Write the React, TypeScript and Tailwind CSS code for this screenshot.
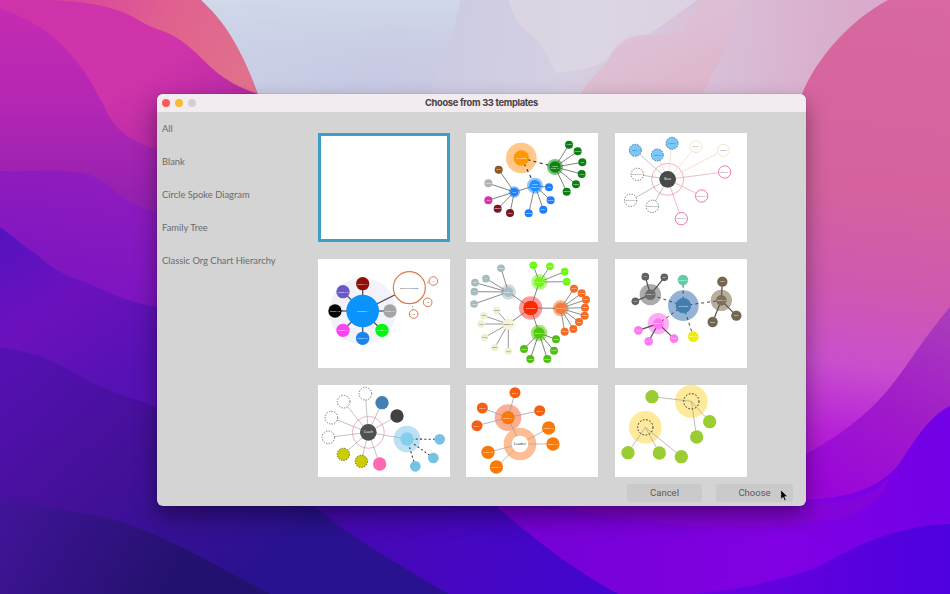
import type React from "react"

interface DiagramNode {
  x: number
  y: number
  r: number
  fill?: string
  stroke?: string
  strokeWidth?: number
  dash?: string
  halo?: number
  haloFill?: string
  haloStroke?: string
  label?: string
  labelSize?: number
  labelFill?: string
}

interface DiagramEdge {
  from: number
  to: number
  color?: string
  width?: number
  dash?: string
}

interface Template {
  id: string
  origin: string
  nodes: DiagramNode[]
  edges: DiagramEdge[]
}

const categories = ["All", "Blank", "Circle Spoke Diagram", "Family Tree", "Classic Org Chart Hierarchy"]

const spokes = (from: number, to: number[], color = "#555555", width = 2.2, dash?: string): DiagramEdge[] =>
  to.map((t) => ({ from, to: t, color, width, dash }))

const ring = (list: [number, number, string?][], base: Omit<DiagramNode, "x" | "y">): DiagramNode[] =>
  list.map(([x, y, label]) => ({ ...base, x, y, label }))

const templates: Template[] = [
  { id: "blank", origin: "12 9 396 327", nodes: [], edges: [] },
  {
    id: "team-leads",
    origin: "12 9 396 327",
    nodes: [
      { x: 178, y: 84, r: 23, fill: "#ff9800", halo: 46, haloFill: "#ffc88a", label: "My Team", labelSize: 7.5 },
      { x: 279, y: 111, r: 17, fill: "#0b870b", halo: 24, haloFill: "#7fbf7f", label: "Team\nLead #1", labelSize: 7 },
      { x: 219, y: 167, r: 17, fill: "#1e90ff", halo: 24, haloFill: "#8ec7ff", label: "Team\nLead #2", labelSize: 7 },
      { x: 157, y: 186, r: 12, fill: "#1e80ff", halo: 17, haloFill: "#85bcff", label: "Sub" },
      ...ring([[321, 44, "Lucas"], [347, 64, "Jennifer"], [361, 97, "Jeff"], [359, 132, "Helen"], [342, 163, "Martin"], [314, 185, "Charlie"]], { r: 12, fill: "#0b7f10" }),
      ...ring([[261, 172, "Alan"], [266, 211, "Robert"], [244, 239, "Emily"], [200, 250, "Sophia"]], { r: 12, fill: "#1e80ff" }),
      { x: 110, y: 119, r: 12, fill: "#8b5726", label: "John" },
      { x: 79, y: 160, r: 12, fill: "#b3b3b3", label: "Susan" },
      { x: 79, y: 211, r: 12, fill: "#df2fa8", label: "Amy" },
      { x: 107, y: 236, r: 12, fill: "#7b1520", label: "George" },
      { x: 144, y: 249, r: 12, fill: "#7b1520", label: "Harry" },
    ],
    edges: [
      { from: 0, to: 1, width: 3.4, color: "#333333", dash: "9 10" },
      { from: 0, to: 2, width: 3.4, color: "#333333", dash: "9 10" },
      { from: 3, to: 2 },
      ...spokes(1, [4, 5, 6, 7, 8, 9]),
      ...spokes(2, [10, 11, 12, 13]),
      ...spokes(3, [14, 15, 16, 17, 18]),
    ],
  },
  {
    id: "boss",
    origin: "14 9 396 327",
    nodes: [
      { x: 172, y: 148, r: 25, fill: "#4a4a4a", halo: 48, haloStroke: "#efa0ac", label: "Boss", labelSize: 9.5 },
      ...ring([[75, 61, "Team 1"], [141, 75, "Team 2"], [185, 40, "Team 3"]], { r: 18, fill: "#7cc8f8", stroke: "#356b93", strokeWidth: 2.5, dash: "5 3", labelFill: "#34678f" }),
      ...ring([[257, 50, "Name 1"], [339, 61, "Name 2"]], { r: 18, fill: "#ffffff", stroke: "#f6dfc0", strokeWidth: 2.5, labelFill: "#777777" }),
      ...ring([[343, 126, "Resource 1"], [274, 198, "Resource 2"], [213, 266, "Resource 3"]], { r: 18.5, fill: "#ffffff", stroke: "#ea78b2", strokeWidth: 3, labelFill: "#a8527d" }),
      ...ring([[81, 133, "Consultant 1"], [61, 211, "Consultant 2"], [126, 229, "Consultant 3"]], { r: 18.5, fill: "#ffffff", stroke: "#555555", strokeWidth: 2.4, dash: "4 4", labelFill: "#666666" }),
    ],
    edges: [
      ...spokes(0, [1], "#a6b3bd"),
      ...spokes(0, [2, 3, 4, 5], "#f1d8bc"),
      ...spokes(0, [6, 7, 8], "#f0a3a8"),
      ...spokes(0, [9, 10, 11], "#aaaaaa"),
    ],
  },
  {
    id: "division",
    origin: "12 9 396 327",
    nodes: [
      { x: 146, y: 165, r: 49, fill: "#0a94fb", halo: 100, haloFill: "#f1f2fa", label: "Division A", labelSize: 7.5 },
      { x: 146, y: 83, r: 20, fill: "#930f05", label: "Team #1", labelSize: 7.5 },
      { x: 87, y: 107, r: 20, fill: "#6b58cb", label: "Team #2", labelSize: 7.5 },
      { x: 63, y: 165, r: 20, fill: "#000000", label: "Team #3", labelSize: 7.5 },
      { x: 87, y: 223, r: 20, fill: "#ff40f4", label: "Team #4", labelSize: 7.5 },
      { x: 146, y: 247, r: 20, fill: "#1b84ec", label: "Team #5", labelSize: 7.5 },
      { x: 204, y: 223, r: 20, fill: "#00f80a", label: "Team #6", labelSize: 7.5 },
      { x: 228, y: 165, r: 20, fill: "#a4a4a4", label: "Team #7", labelSize: 7.5 },
      { x: 286, y: 95, r: 48, fill: "#ffffff", stroke: "#dc7848", strokeWidth: 3.6, label: "Satellite Division", labelSize: 7.2, labelFill: "#222222" },
      ...ring([[358, 75, "#1"], [341, 139, "#2"], [299, 174, "#3"]], { r: 13, fill: "#ffffff", stroke: "#dc7848", strokeWidth: 3, labelSize: 7, labelFill: "#333333" }),
    ],
    edges: [
      ...spokes(0, [1, 2, 3, 4, 5, 6, 7, 8], "#55555f", 4),
      ...spokes(8, [9, 10, 11], "#777777", 2, "5 6"),
    ],
  },
  {
    id: "big-boss",
    origin: "14 9 396 327",
    nodes: [
      { x: 208, y: 156, r: 22, fill: "#ff2800", halo: 35, haloFill: "#ff9a9a", label: "Big Boss", labelSize: 7.5 },
      { x: 141, y: 108, r: 15, fill: "#a9bdc3", halo: 23, haloFill: "#d0dde0", label: "Team #1", labelSize: 7 },
      { x: 234, y: 78, r: 16, fill: "#72fa17", halo: 24, haloFill: "#b9f78a", label: "Team #2", labelSize: 7 },
      { x: 298, y: 157, r: 17, fill: "#fa7832", halo: 24, haloFill: "#ffb184", label: "Team #3", labelSize: 7 },
      { x: 233, y: 231, r: 17, fill: "#52c80c", halo: 25, haloFill: "#a9e37c", label: "Team #4", labelSize: 7 },
      { x: 141, y: 204, r: 17, fill: "#f4f4dc", halo: 23, haloFill: "#fafaf0", label: "Team #5", labelSize: 7.5, labelFill: "#222222" },
      ...ring([[119, 37, "Name"], [74, 68, "Liz"], [41, 80, "Bob"], [39, 107, "Kim"], [38, 144, "Karen"]], { r: 11.5, fill: "#a4bcbe" }),
      ...ring([[216, 28, "Sam"], [266, 31, "Mark"], [310, 47, "Jim"], [316, 77, "Molly"]], { r: 11.5, fill: "#6df916" }),
      ...ring([[338, 98, "Brian"], [361, 112, "William"], [374, 131, "Peter"], [371, 155, "Todd"], [370, 179, "Sarah"], [353, 198, "Mary"], [336, 219, "Nick"], [310, 227, "Claire"]], { r: 12, fill: "#f66c25" }),
      ...ring([[284, 250, "Olivia"], [278, 284, "Taylor"], [258, 309, "Steven"], [207, 309, "Name"], [188, 279, "Daniel"]], { r: 12, fill: "#50bd14" }),
      ...ring([[106, 163, "Louisa"], [67, 179, "Tom"], [59, 204, "Fred"], [70, 244, "Brian"], [100, 275, "James"], [141, 286, "Julia"]], { r: 11, fill: "#efefd4", labelFill: "#555555" }),
    ],
    edges: [
      ...spokes(0, [1, 2, 3, 4, 5], "#666666", 2.4),
      ...spokes(1, [6, 7, 8, 9, 10], "#707070", 2.4),
      ...spokes(2, [11, 12, 13, 14], "#707070", 2.4),
      ...spokes(3, [15, 16, 17, 18, 19, 20, 21, 22], "#707070", 2.4),
      ...spokes(4, [23, 24, 25, 26, 27], "#606060", 2.4),
      ...spokes(5, [28, 29, 30, 31, 32, 33], "#808080", 2.4),
    ],
  },
  {
    id: "big-boss-dashed",
    origin: "14 9 396 327",
    nodes: [
      { x: 219, y: 149, r: 23, fill: "#427fb1", halo: 46, haloFill: "#95b4d5", label: "Big Boss", labelSize: 7 },
      { x: 120, y: 116, r: 16, fill: "#6b6b6b", halo: 32, haloFill: "#ababab", label: "Team #1", labelSize: 6.5 },
      { x: 333, y: 133, r: 16, fill: "#7c7059", halo: 32, haloFill: "#b9ae9c", label: "Team #3", labelSize: 6.5 },
      { x: 144, y: 203, r: 16, fill: "#ff78f3", halo: 32, haloFill: "#ffacf7", label: "Team #4", labelSize: 6.5 },
      { x: 218, y: 72, r: 16, fill: "#62cda4", label: "Team #2", labelSize: 6.5 },
      { x: 249, y: 242, r: 16, fill: "#eeee00", label: "Team #5", labelSize: 6.5 },
      ...ring([[105, 62, "Liz"], [162, 64, "Bob"], [75, 136, "Kim"]], { r: 11.5, fill: "#606060" }),
      ...ring([[336, 77, "Mark"], [307, 198, "Steve"], [378, 179, "John"]], { r: 15.5, fill: "#74664f" }),
      ...ring([[84, 223, "Lucy"], [115, 256, "Emma"], [191, 248, "Karen"]], { r: 13, fill: "#ff78f3" }),
    ],
    edges: [
      ...spokes(0, [1, 2, 3, 4, 5], "#444444", 3, "9 9"),
      ...spokes(1, [6, 7, 8], "#505050", 3.6),
      ...spokes(2, [9, 10, 11], "#505050", 3.6),
      ...spokes(3, [12, 13, 14], "#505050", 3.6),
    ],
  },
  {
    id: "coach",
    origin: "12 14 396 327",
    nodes: [
      { x: 163, y: 156, r: 25, fill: "#505050", halo: 48, haloStroke: "#f0a5ae", label: "Coach", labelSize: 9.5 },
      ...ring([[154, 40], [89, 64], [52, 112], [43, 171]], { r: 19, fill: "#ffffff", stroke: "#555555", strokeWidth: 2.4, dash: "4 4" }),
      { x: 204, y: 67, r: 20, fill: "#427fb4" },
      { x: 249, y: 107, r: 20, fill: "#404042" },
      { x: 279, y: 176, r: 20, fill: "#83ceea", halo: 40, haloFill: "#bce0f4" },
      ...ring([[88, 222], [142, 243]], { r: 18.5, fill: "#cbcc04", stroke: "#5c5c0b", strokeWidth: 2.8, dash: "4 4" }),
      { x: 197, y: 251, r: 20, fill: "#ff69b4" },
      ...ring([[377, 177], [358, 233], [304, 258]], { r: 16, fill: "#74c2e5" }),
    ],
    edges: [
      ...spokes(0, [1, 2, 3, 4, 5, 6, 7, 8, 9, 10], "#adadad", 2.2),
      ...spokes(7, [11, 12, 13], "#333333", 3.2, "6 7"),
    ],
  },
  {
    id: "leader",
    origin: "12 14 396 327",
    nodes: [
      { x: 174, y: 191, r: 25, fill: "#ffffff", halo: 49, haloFill: "#ffbd93", label: "Leader", labelSize: 11.5, labelFill: "#111111" },
      { x: 138, y: 112, r: 20, fill: "#f97a0a", halo: 40, haloFill: "#fcae94", label: "Team #1", labelSize: 7 },
      ...ring([[159, 37, "Sub 4"], [61, 83, "Sub 2"], [45, 136, "Sub 1"], [233, 91, "Sub 3"]], { r: 16.5, fill: "#f36013", labelSize: 7 }),
      ...ring([[260, 143, "Team #2"], [273, 191, "Team #3"], [103, 260, "Team #4"], [78, 216, "Team #5"]], { r: 20, fill: "#fa7907", labelSize: 7.5 }),
    ],
    edges: [
      { from: 0, to: 1, color: "#999999", width: 2.2 },
      ...spokes(1, [2, 3, 4, 5], "#999999", 2.2),
      ...spokes(0, [6, 7, 8, 9], "#a5a5a5", 2.2),
    ],
  },
  {
    id: "pods",
    origin: "14 14 396 327",
    nodes: [
      { x: 243, y: 63, r: 23, fill: "none", stroke: "#222222", strokeWidth: 2.8, dash: "5 5", halo: 49, haloFill: "#ffe99a" },
      { x: 105, y: 141, r: 23, fill: "none", stroke: "#222222", strokeWidth: 2.8, dash: "5 5", halo: 49, haloFill: "#ffe99a" },
      ...ring([[125, 49], [298, 124], [259, 170], [53, 217], [147, 218], [213, 229]], { r: 20, fill: "#9acd32" }),
    ],
    edges: [...spokes(0, [2, 3, 4], "#aaa59a"), ...spokes(1, [5, 6, 7], "#aaa59a")],
  },
]

const NodeLabel: React.FC<{ node: DiagramNode }> = ({ node }) => {
  const size = node.labelSize ?? 6
  const lines = (node.label ?? "").split("\n")
  return (
    <>
      {lines.map((line, i) => (
        <text
          key={line}
          x={node.x}
          y={node.y + size * 0.36 + (i - (lines.length - 1) / 2) * size * 1.1}
          textAnchor="middle"
          fontSize={size}
          fill={node.labelFill ?? "#ffffff"}
        >
          {line}
        </text>
      ))}
    </>
  )
}

const Diagram: React.FC<{ template: Template }> = ({ template }) => {
  const { nodes, edges, origin } = template
  return (
    <svg viewBox={origin} className="block h-[109px] w-[132px] font-['Open_Sans',sans-serif]">
      {nodes.map((n, i) =>
        n.halo ? (
          <circle key={i} cx={n.x} cy={n.y} r={n.halo} fill={n.haloFill ?? "none"} stroke={n.haloStroke} strokeWidth={2.5} />
        ) : null,
      )}
      {edges.map((e, i) => (
        <line
          key={i}
          x1={nodes[e.from].x}
          y1={nodes[e.from].y}
          x2={nodes[e.to].x}
          y2={nodes[e.to].y}
          stroke={e.color ?? "#555555"}
          strokeWidth={e.width ?? 2.2}
          strokeDasharray={e.dash}
        />
      ))}
      {nodes.map((n, i) => (
        <g key={i}>
          <circle cx={n.x} cy={n.y} r={n.r} fill={n.fill} stroke={n.stroke} strokeWidth={n.strokeWidth} strokeDasharray={n.dash} />
          {n.label && <NodeLabel node={n} />}
        </g>
      ))}
    </svg>
  )
}

const Wallpaper: React.FC = () => (
  <svg viewBox="0 0 950 594" className="absolute inset-0 h-full w-full" preserveAspectRatio="none">
    <defs>
      <linearGradient id="sky" gradientUnits="userSpaceOnUse" x1="230" y1="0" x2="860" y2="60">
        <stop offset="0" stopColor="#cbd4e9" />
        <stop offset="0.25" stopColor="#c8cae4" />
        <stop offset="0.55" stopColor="#d6cfe1" />
        <stop offset="0.8" stopColor="#d9bdd6" />
        <stop offset="1" stopColor="#d9aacb" />
      </linearGradient>
      <linearGradient id="mist" gradientUnits="userSpaceOnUse" x1="0" y1="0" x2="0" y2="94">
        <stop offset="0" stopColor="#d0daea" stopOpacity="0.9" />
        <stop offset="1" stopColor="#c6c4e2" stopOpacity="0.3" />
      </linearGradient>
      <linearGradient id="blush" gradientUnits="userSpaceOnUse" x1="640" y1="30" x2="660" y2="94">
        <stop offset="0" stopColor="#dfbfd2" />
        <stop offset="1" stopColor="#e0b4c9" />
      </linearGradient>
      <linearGradient id="coral" gradientUnits="userSpaceOnUse" x1="60" y1="0" x2="250" y2="90">
        <stop offset="0" stopColor="#d8449f" />
        <stop offset="0.5" stopColor="#e0618f" />
        <stop offset="1" stopColor="#e0728c" />
      </linearGradient>
      <linearGradient id="magenta" gradientUnits="userSpaceOnUse" x1="60" y1="0" x2="150" y2="150">
        <stop offset="0" stopColor="#cf33aa" />
        <stop offset="0.6" stopColor="#d034aa" />
        <stop offset="1" stopColor="#b82aa5" />
      </linearGradient>
      <linearGradient id="orchid" gradientUnits="userSpaceOnUse" x1="0" y1="0" x2="0" y2="215">
        <stop offset="0" stopColor="#c62cb0" />
        <stop offset="0.5" stopColor="#b326b4" />
        <stop offset="1" stopColor="#8f20ae" />
      </linearGradient>
      <linearGradient id="violet" gradientUnits="userSpaceOnUse" x1="80" y1="170" x2="60" y2="300">
        <stop offset="0" stopColor="#901cbd" />
        <stop offset="1" stopColor="#7a14c2" />
      </linearGradient>
      <linearGradient id="indigo" gradientUnits="userSpaceOnUse" x1="0" y1="230" x2="100" y2="390">
        <stop offset="0" stopColor="#5512c0" />
        <stop offset="0.5" stopColor="#6c11bd" />
        <stop offset="1" stopColor="#5611b4" />
      </linearGradient>
      <linearGradient id="deep" gradientUnits="userSpaceOnUse" x1="40" y1="350" x2="240" y2="580">
        <stop offset="0" stopColor="#5410b0" />
        <stop offset="0.45" stopColor="#431098" />
        <stop offset="1" stopColor="#2a1190" />
      </linearGradient>
      <linearGradient id="night" gradientUnits="userSpaceOnUse" x1="0" y1="500" x2="160" y2="594">
        <stop offset="0" stopColor="#42149a" />
        <stop offset="1" stopColor="#24116f" />
      </linearGradient>
      <linearGradient id="cobalt" gradientUnits="userSpaceOnUse" x1="330" y1="500" x2="600" y2="594">
        <stop offset="0" stopColor="#4609b0" />
        <stop offset="1" stopColor="#4405d0" />
      </linearGradient>
      <linearGradient id="rose" gradientUnits="userSpaceOnUse" x1="900" y1="0" x2="840" y2="480">
        <stop offset="0" stopColor="#d8689f" />
        <stop offset="0.4" stopColor="#d5629f" />
        <stop offset="0.6" stopColor="#cf58b0" />
        <stop offset="0.76" stopColor="#c94fcd" />
        <stop offset="0.9" stopColor="#b722d8" />
        <stop offset="1" stopColor="#a810da" />
      </linearGradient>
      <linearGradient id="fuchsia" gradientUnits="userSpaceOnUse" x1="950" y1="320" x2="850" y2="500">
        <stop offset="0" stopColor="#aa3bbc" />
        <stop offset="0.5" stopColor="#a01bc9" />
        <stop offset="1" stopColor="#9a06da" />
      </linearGradient>
      <linearGradient id="purple" gradientUnits="userSpaceOnUse" x1="520" y1="500" x2="950" y2="480">
        <stop offset="0" stopColor="#7402d4" />
        <stop offset="0.6" stopColor="#8200e4" />
        <stop offset="1" stopColor="#7200e6" />
      </linearGradient>
      <linearGradient id="electric" gradientUnits="userSpaceOnUse" x1="700" y1="0" x2="950" y2="0">
        <stop offset="0" stopColor="#6c00de" />
        <stop offset="1" stopColor="#4e00df" />
      </linearGradient>
    </defs>
    <rect width="950" height="594" fill="url(#sky)" />
    <path d="M190 0H460C455 35 440 60 430 94H190Z" fill="url(#mist)" />
    <path d="M509 0C514 20 520 26 530 34C545 45 548 60 556 73C575 71 600 68 612 55C625 40 635 36 650 34L697 0Z" fill="#ded8e4" opacity="0.7" />
    <path d="M581 94C590 76 602 70 608 60C616 42 628 36 642 35C660 34 678 36 686 27C695 14 696 6 700 0H739C734 35 718 62 703 94Z" fill="url(#blush)" opacity="0.75" />
    <path d="M0 0H201C225 22 241 48 258 94V200H0Z" fill="url(#coral)" />
    <path d="M0 0H50C95 2 120 8 142 22C155 30 165 30 177 38C205 55 210 78 258 94V200H0Z" fill="url(#magenta)" />
    <path d="M0 8C20 16 50 28 73 57C92 80 96 92 103 104C115 132 130 142 170 154V320H0Z" fill="url(#orchid)" />
    <path d="M0 171C30 173 75 166 97 178C120 191 125 208 170 214V340H0Z" fill="url(#violet)" />
    <path d="M0 227C15 238 25 247 36 254C50 267 62 274 79 280C115 294 125 303 170 309V480H0Z" fill="url(#indigo)" />
    <path d="M0 347C30 352 45 357 60 365C80 375 90 384 109 390C130 398 160 404 210 440L315 480L460 594H0Z" fill="url(#deep)" />
    <path d="M0 498C45 508 78 510 121 522C175 540 220 568 270 594H0Z" fill="url(#night)" />
    <path d="M290 480H480L630 594H448C400 565 350 537 315 507Z" fill="url(#cobalt)" />
    <path d="M888 0C850 20 815 60 802 94L780 500H950V0Z" fill="url(#rose)" />
    <path d="M950 307C920 342 903 375 878 401C855 425 825 445 790 462V540H950Z" fill="url(#fuchsia)" />
    <path d="M470 480L790 500C850 500 885 488 905 455C920 432 932 415 950 406V594H618C570 567 535 540 497 507Z" fill="url(#purple)" />
    <path d="M560 500H810C850 508 880 490 890 475C880 510 850 520 800 524C740 530 640 528 560 506Z" fill="#8f0bc8" opacity="0.35" />
    <path d="M690 594C740 590 780 580 818 567C855 545 900 525 950 524V594Z" fill="url(#electric)" />
  </svg>
)

const TitleBar: React.FC = () => (
  <div className="relative flex h-[18px] items-center bg-[#f2ebf0] px-[5px]">
    <div className="flex gap-[5px]">
      <span className="h-2 w-2 rounded-full bg-[#fc5b57]" />
      <span className="h-2 w-2 rounded-full bg-[#fcbb2e]" />
      <span className="h-2 w-2 rounded-full bg-[#d4ced3]" />
    </div>
    <h1 className="absolute inset-x-0 text-center font-['Inter',sans-serif] text-[9.3px] leading-[18px] font-bold tracking-[-0.29px] text-[#444044]">
      Choose from 33 templates
    </h1>
  </div>
)

const Sidebar: React.FC = () => (
  <nav className="w-[161px] shrink-0 pt-px pl-[5px]">
    {categories.map((name) => (
      <div key={name} className="flex h-[33px] items-center font-['Lato',sans-serif] text-[9.4px] whitespace-nowrap text-[#6b6b6b]">
        {name}
      </div>
    ))}
  </nav>
)

export default function App() {
  return (
    <div className="relative h-[594px] w-[950px] overflow-hidden">
      <Wallpaper />
      <div className="relative pt-[94px] pl-[157px]">
        <div className="flex h-[412px] w-[649px] flex-col overflow-hidden rounded-[6px] bg-[#d4d4d4] shadow-[0_10px_22px_rgba(0,0,0,0.4),0_0_1px_rgba(0,0,0,0.5)]">
          <TitleBar />
          <div className="flex h-[365px] shrink-0 overflow-hidden">
            <Sidebar />
            <div className="grid auto-rows-[109px] grid-cols-[132px_132px_132px] content-start gap-x-[16.3px] gap-y-[17px] pt-[21px]">
              {templates.map((template) => (
                <div key={template.id} className="relative bg-white">
                  <Diagram template={template} />
                  {template.id === "blank" && <div className="absolute inset-0 border-3 border-[#3aa0c9]" />}
                </div>
              ))}
            </div>
          </div>
          <div className="flex justify-end gap-[14px] pt-[7px] pr-[13px] font-['Roboto',sans-serif] text-[9.5px] text-[#5c5c5c]">
            <button className="h-[18px] w-[75px] rounded-[3px] bg-[#cacaca]">Cancel</button>
            <button className="h-[18px] w-[77px] rounded-[3px] bg-[#cacaca]">Choose</button>
          </div>
        </div>
      </div>
      <svg viewBox="0 0 12 18" className="absolute top-[489px] left-[780px] h-[13px] w-[8.7px] overflow-visible">
        <path d="M1 1V14.5L4.2 11.6L6.3 16.5L8.6 15.5L6.5 10.7H11Z" fill="#000000" stroke="#e8e8e8" strokeWidth="1" />
      </svg>
    </div>
  )
}
